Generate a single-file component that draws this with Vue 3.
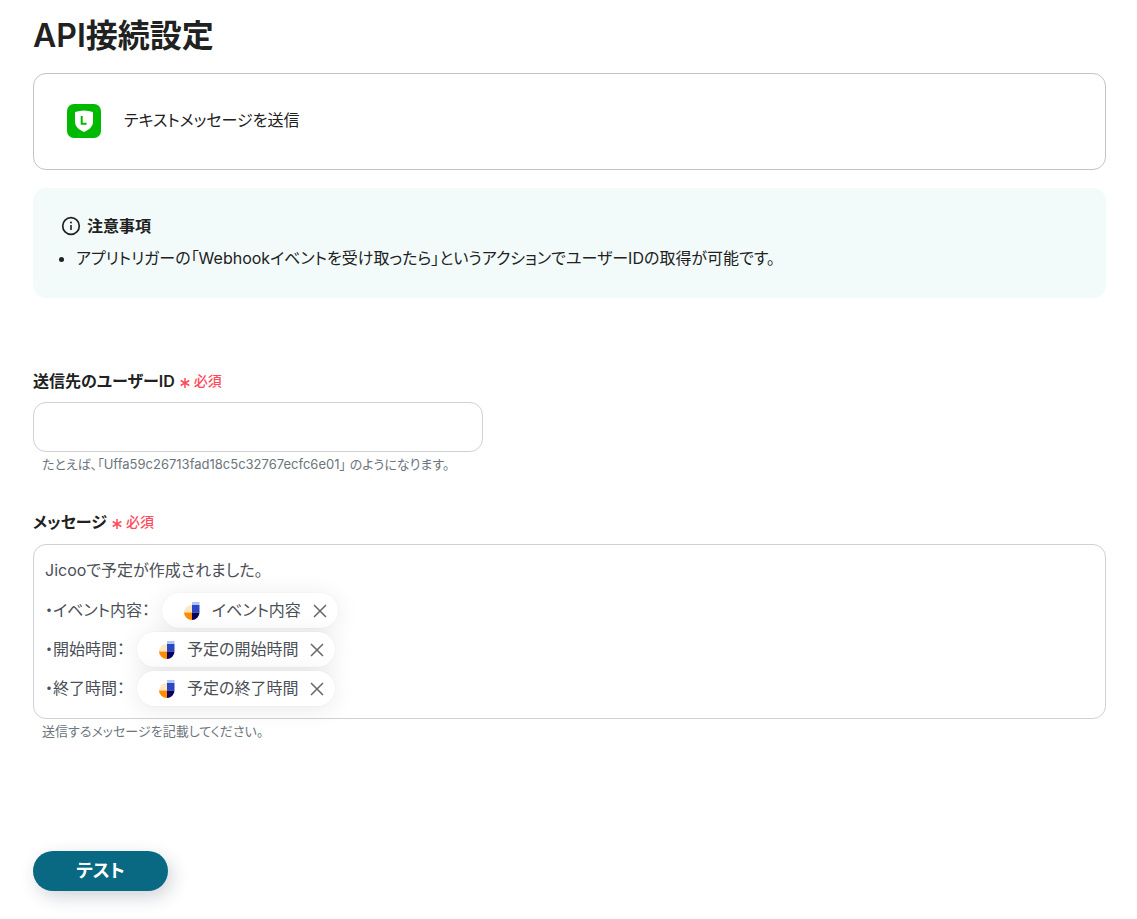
<script setup>
import { ref } from 'vue'

const userId = ref('')
const lines = ref([
  { label: '・イベント内容：', chip: 'イベント内容' },
  { label: '・開始時間：', chip: '予定の開始時間' },
  { label: '・終了時間：', chip: '予定の終了時間' }
])

function removeChip(line) {
  line.chip = ''
}
</script>

<template>
  <main class="page">
    <h1 class="title">API接続設定</h1>

    <section class="action-card">
      <svg class="app-icon" viewBox="0 0 34 34" aria-hidden="true">
        <rect width="34" height="34" rx="7" fill="#00b900" />
        <path d="M8 8Q17 5 26 8V17.500C26 22.500 22.500 25.500 17 28C11.500 25.500 8 22.500 8 17.500Z" fill="#fff" />
        <path d="M14.700 12V19.800H19.600" fill="none" stroke="#00b900" stroke-width="2" />
      </svg>
      <p class="action-name">テキストメッセージを送信</p>
    </section>

    <section class="notice">
      <h2 class="notice-title">
        <svg class="info-icon" viewBox="0 0 20 20" aria-hidden="true">
          <circle cx="10" cy="10" r="8.300" fill="none" stroke="#212121" stroke-width="1.700" />
          <path d="M10 9V14" stroke="#212121" stroke-width="1.600" />
          <circle cx="10" cy="6.400" r="1" fill="#212121" />
        </svg>
        <span>注意事項</span>
      </h2>
      <ul class="notice-list">
        <li>アプリトリガーの「Webhookイベントを受け取ったら」というアクションでユーザーIDの取得が可能です。</li>
      </ul>
    </section>

    <form class="form" @submit.prevent>
      <div class="field">
        <label class="label" for="user-id">
          <span>送信先のユーザーID</span>
          <span class="required">
            <svg class="asterisk" viewBox="0 0 10 10" aria-hidden="true">
              <path d="M5 0V10M0.700 2.500L9.300 7.500M9.300 2.500L0.700 7.500" stroke="#ff4b5c" stroke-width="1.500" />
            </svg>
            必須
          </span>
        </label>
        <input id="user-id" v-model="userId" class="input" type="text" aria-describedby="user-id-help" />
        <p id="user-id-help" class="help">たとえば、「Uffa59c26713fad18c5c32767ecfc6e01」 のようになります。</p>
      </div>

      <div class="field">
        <div id="message-label" class="label">
          <span>メッセージ</span>
          <span class="required">
            <svg class="asterisk" viewBox="0 0 10 10" aria-hidden="true">
              <path d="M5 0V10M0.700 2.500L9.300 7.500M9.300 2.500L0.700 7.500" stroke="#ff4b5c" stroke-width="1.500" />
            </svg>
            必須
          </span>
        </div>
        <div class="editor" role="textbox" aria-multiline="true" aria-labelledby="message-label" tabindex="0">
          <p class="intro">Jicooで予定が作成されました。</p>
          <p v-for="line in lines" :key="line.label" class="line">
            <span class="line-text">{{ line.label }}</span>
            <span v-if="line.chip" class="chip">
              <svg class="chip-logo" viewBox="0 0 16 18" aria-hidden="true">
                <path d="M0 10.500A8 7.500 0 0 1 8 3V10.500Z" fill="#ffe7c2" />
                <path d="M0 10.500H8V18A8 7.500 0 0 1 0 10.500Z" fill="#ff8c00" />
                <rect x="8" width="7.500" height="3" fill="#afc3fa" />
                <rect x="8" y="3" width="7.500" height="7.500" fill="#2b47c4" />
                <path d="M8 10.500H15.500A7.500 7.500 0 0 1 8 18Z" fill="#08005f" />
              </svg>
              <span class="line-text">{{ line.chip }}</span>
              <button class="remove" type="button" :aria-label="line.chip + 'を削除'" @click="removeChip(line)">
                <svg viewBox="0 0 14 14" aria-hidden="true">
                  <path d="M1 1L13 13M13 1L1 13" stroke="#666" stroke-width="1.500" />
                </svg>
              </button>
            </span>
          </p>
        </div>
        <p class="help">送信するメッセージを記載してください。</p>
      </div>

      <button class="test" type="submit">テスト</button>
    </form>
  </main>
</template>

<style>
body {
  margin: 0;
  background: #fff;
}
</style>

<style scoped>
.page {
  box-sizing: border-box;
  padding: 12px 31px 28px 33px;
  color: #212121;
  font-family: Inter, "Noto Sans CJK JP", sans-serif;
  font-size: 16px;
  line-height: 24px;
  font-feature-settings: "palt";
}

h1, h2, p, ul {
  margin: 0;
}

.title {
  margin-bottom: 13px;
  font-size: 32px;
  line-height: 48px;
  font-weight: 600;
}

.action-card {
  display: flex;
  align-items: center;
  gap: 23px;
  padding: 30px 33px 31px;
  border: 1px solid #c4c4c4;
  border-radius: 13px;
}

.app-icon {
  flex: none;
  width: 34px;
  height: 34px;
}

.action-name {
  padding-bottom: 2px;
}

.notice {
  margin-top: 18px;
  padding: 26px 28px 28px;
  border-radius: 13px;
  background: #f2fbfa;
}

.notice-title {
  display: flex;
  align-items: center;
  gap: 6px;
  margin-bottom: 8px;
  font-size: 16px;
  line-height: 24px;
  font-weight: 600;
}

.info-icon {
  width: 20px;
  height: 20px;
}

.notice-list {
  padding-left: 15px;
}

.form {
  display: flex;
  flex-direction: column;
  align-items: flex-start;
  margin-top: 71px;
}

.field {
  width: 100%;
  margin-bottom: 36px;
}

.label {
  display: flex;
  align-items: center;
  gap: 5px;
  margin-bottom: 10px;
  font-weight: 600;
}

.field:first-child .label {
  margin-bottom: 9px;
}

.required {
  display: flex;
  align-items: center;
  gap: 4px;
  color: #ff4b5c;
  font-size: 14px;
  font-weight: 500;
}

.asterisk {
  width: 10px;
  height: 10px;
  margin-top: 3px;
}

.input {
  display: block;
  box-sizing: border-box;
  width: 450px;
  max-width: 100%;
  height: 50px;
  padding: 0 12px;
  border: 1px solid #cfd1d9;
  border-radius: 13px;
  color: #4c4f56;
  background: #fff;
  font: inherit;
}

.help {
  margin: 2px 9px 0;
  color: #6c757d;
  font-size: 13px;
  line-height: 20px;
}

.editor {
  padding: 13px 11px 10px;
  border: 1px solid #cfd1d9;
  border-radius: 13px;
  color: #4c4f56;
}

.intro {
  margin-bottom: 9px;
}

.line {
  display: flex;
  align-items: center;
  gap: 12px;
  min-height: 39px;
}

.line-text {
  padding-bottom: 2px;
}

.chip {
  display: flex;
  align-items: center;
  box-sizing: border-box;
  height: 35px;
  padding: 0 11px 0 22px;
  border-radius: 18px;
  background: #fff;
  box-shadow: 0 0 2px rgba(0, 0, 0, 0.05), 0 3px 24px rgba(0, 0, 0, 0.09);
}

.chip-logo {
  width: 16px;
  height: 18px;
  margin-right: 12px;
}

.remove {
  display: flex;
  margin-left: 12px;
  padding: 0;
  border: 0;
  background: none;
  cursor: pointer;
}

.remove svg {
  width: 14px;
  height: 14px;
}

.test {
  min-width: 135px;
  height: 40px;
  margin-top: 74px;
  padding: 0 40px;
  border: 0;
  border-radius: 20px;
  color: #fff;
  background: #0a6982;
  box-shadow: 4px 6px 18px rgba(20, 40, 60, 0.2);
  font: inherit;
  font-size: 18px;
  font-weight: 600;
  font-feature-settings: "palt";
  cursor: pointer;
}
</style>
